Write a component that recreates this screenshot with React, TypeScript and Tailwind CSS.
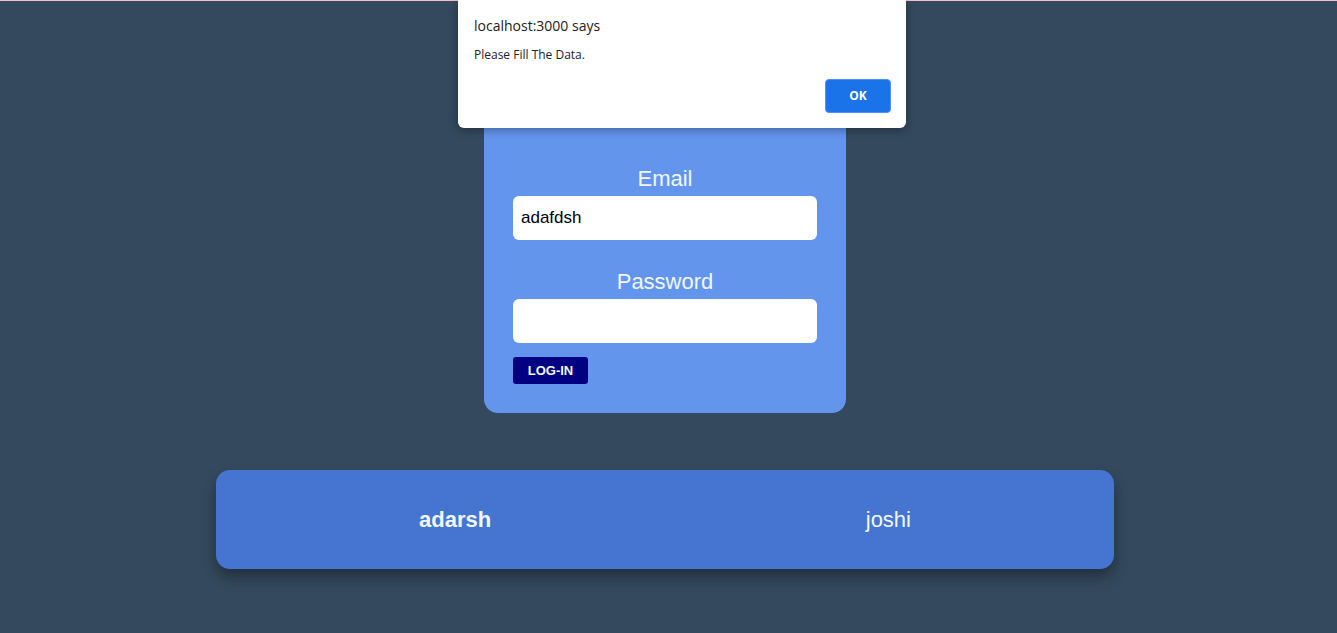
import React from 'react';

export default function App() {
  return (
    <div className="relative min-h-[633px] bg-[#34495e] font-['Liberation_Sans',Arial,sans-serif]">
      {/* thin strip at the very top */}
      <div className="h-px bg-[#f4c2c8]" />

      <div className="flex flex-col items-center pr-[7px]">
        {/* Login card */}
        <div className="mt-[99px] w-[362px] rounded-[14px] bg-[#6495ed] px-[29px] pt-[66px] pb-[29px]">
          <label className="block text-center text-[22px] leading-[25px] text-[#f0f8ff]">Email</label>
          <input
            className="mt-[5px] block h-[44px] w-full rounded-[6px] bg-white px-2 text-[17px] text-black outline-none"
            defaultValue="adafdsh"
          />
          <label className="mt-[29px] block text-center text-[22px] leading-[25px] text-[#f0f8ff]">Password</label>
          <input
            type="password"
            className="mt-[5px] block h-[44px] w-full rounded-[6px] bg-white px-2 text-[17px] text-black outline-none"
          />
          <button className="mt-[14px] block h-[27px] w-[75px] rounded-[3px] bg-[#000080] text-[13px] font-bold text-[#f0f8ff]">
            LOG-IN
          </button>
        </div>

        {/* Name bar */}
        <div className="mt-[57px] flex h-[99px] w-[898px] items-center justify-between rounded-[14px] bg-[#4575d1] px-[203px] text-[22px] text-[#f0f8ff] shadow-[0_8px_14px_rgba(0,0,0,0.35)]">
          <span className="font-bold">adarsh</span>
          <span>joshi</span>
        </div>
      </div>

      {/* Browser alert dialog */}
      <div className="absolute left-[458px] top-0 h-[128px] w-[448px] rounded-b-[6px] bg-white px-4 font-['Open_Sans','Noto_Sans',sans-serif] shadow-[0_2px_10px_rgba(0,0,0,0.35)]">
        <div className="pt-[16px] text-[14px] leading-[20px] text-[#202124]">localhost:3000 says</div>
        <div className="mt-[11px] text-[12px] leading-[16px] text-[#202124]">Please Fill The Data.</div>
        <div className="mt-[16px] flex justify-end">
          <button className="mr-[-1px] h-[34px] w-[66px] rounded-[4px] border border-[#4d90fe] bg-[#1a73e8] text-[12px] font-bold text-white">
            OK
          </button>
        </div>
      </div>
    </div>
  );
}
